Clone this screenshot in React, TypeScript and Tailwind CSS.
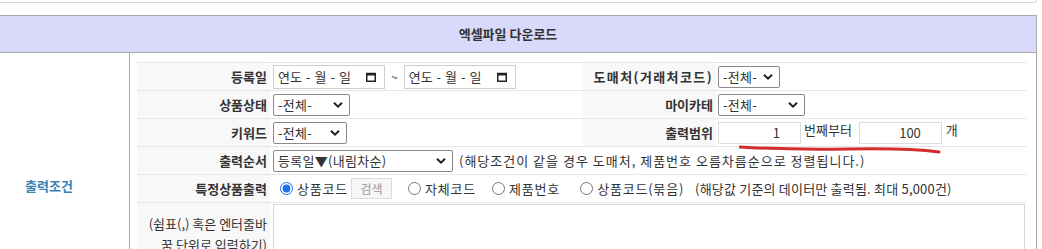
import React from "react";

const font = { fontFamily: '"Noto Sans CJK KR", "Noto Sans", sans-serif' };

function Chevron() {
  return (
    <svg
      className="pointer-events-none absolute right-[7px] top-1/2 -translate-y-1/2"
      width="10"
      height="7"
      viewBox="0 0 10 7"
      fill="none"
    >
      <path d="M1 1.2 L5 5.2 L9 1.2" stroke="#222" strokeWidth="2" />
    </svg>
  );
}

function Select({ width, value }: { width: string; value: string }) {
  return (
    <div className={`relative h-[22px] ${width}`}>
      <select
        defaultValue={value}
        className="h-full w-full appearance-none rounded-[2px] border border-[#8a8a8a] bg-white pl-[4px] text-[13px] leading-[20px] tracking-[0.3px] text-[#333] outline-none"
      >
        <option>{value}</option>
      </select>
      <Chevron />
    </div>
  );
}

function DateBox() {
  return (
    <div className="flex h-[24px] w-[112px] items-center justify-between border border-[#cfcfcf] bg-white pl-[4px] pr-[8px] text-[13px] text-[#333]">
      <span className="flex items-center">
        연도<span className="mx-[4px]">-</span>월<span className="mx-[4px]">-</span>일
      </span>
      <svg width="10" height="10" viewBox="0 0 10 10" fill="none">
        <rect x="0.75" y="1.5" width="8.5" height="7.75" stroke="#222" strokeWidth="1.5" />
        <rect x="0.75" y="1.5" width="8.5" height="2" fill="#222" />
      </svg>
    </div>
  );
}

function Label({ children, className = "" }: { children: React.ReactNode; className?: string }) {
  return (
    <div
      className={`flex h-[28px] items-center justify-end border-b border-[#e6e6e6] bg-[#f8f8f8] pr-[3px] text-[13px] font-bold text-[#333] ${className}`}
    >
      {children}
    </div>
  );
}

function Cell({ children, className = "" }: { children?: React.ReactNode; className?: string }) {
  return (
    <div className={`flex h-[28px] items-center border-b border-[#e6e6e6] text-[13px] text-[#333] ${className}`}>
      {children}
    </div>
  );
}

function Radio({ label, checked = false, className = "" }: { label: string; checked?: boolean; className?: string }) {
  return (
    <label className={`flex items-center ${className}`}>
      <input
        type="radio"
        name="spec"
        defaultChecked={checked}
        className="m-0 h-[13px] w-[13px] accent-[#1a73e8]"
      />
      <span className="ml-[4px] tracking-[0.8px]">{label}</span>
    </label>
  );
}

export default function App() {
  return (
    <div className="w-[1042px] bg-white" style={font}>
      <div className="h-[3px] w-[1037px] rounded-br-[5px] border-b border-r border-[#d6d6d6]" />
      <div className="h-[12px]" />

      <div className="w-[1037px] border-r border-[#a9a9a9]">
        <div className="flex h-[38px] items-center justify-center border-b border-t border-[#a9a9a9] bg-[#d9d9fb] pr-[20px] text-[13px] font-semibold text-[#333]">
          엑셀파일 다운로드
        </div>

        <div className="flex">
          <div className="flex w-[130px] items-center border-r border-[#a9a9a9] pl-[25px] text-[13px] font-bold text-[#3883b4]">
            출력조건
          </div>

          <div className="flex-1 pb-[10px] pl-[7px] pr-[9px] pt-[9px]">
            <div className="relative grid grid-cols-[133px_313px_133px_1fr] border-t border-[#e6e6e6]">
              {/* row 1 */}
              <Label>등록일</Label>
              <Cell className="pl-[3px]">
                <DateBox />
                <span className="mx-[6px] text-[12px]">~</span>
                <DateBox />
              </Cell>
              <Label className="tracking-[1.4px]">도매처(거래처코드)</Label>
              <Cell className="pl-[2px]">
                <Select width="w-[62px]" value="-전체-" />
              </Cell>

              {/* row 2 */}
              <Label>상품상태</Label>
              <Cell className="pl-[3px]">
                <Select width="w-[77px]" value="-전체-" />
              </Cell>
              <Label>마이카테</Label>
              <Cell className="pl-[2px]">
                <Select width="w-[87px]" value="-전체-" />
              </Cell>

              {/* row 3 */}
              <Label>키워드</Label>
              <Cell className="pl-[3px]">
                <Select width="w-[74px]" value="-전체-" />
              </Cell>
              <Label>출력범위</Label>
              <Cell className="pl-[2px]">
                <input
                  defaultValue="1"
                  className="h-[22px] w-[83px] border border-[#dcdcdc] bg-white pr-[20px] text-right text-[13px] outline-none"
                />
                <span className="ml-[3px] self-start pt-[1px]">번째부터</span>
                <input
                  defaultValue="100"
                  className="ml-[7px] h-[22px] w-[83px] border border-[#dcdcdc] bg-white pr-[20px] text-right text-[13px] outline-none"
                />
                <span className="ml-[4px] self-start pt-[1px]">개</span>
              </Cell>

              {/* row 4 */}
              <Label>출력순서</Label>
              <Cell className="col-span-3 pl-[3px]">
                <Select width="w-[180px]" value="등록일▼(내림차순)" />
                <span className="ml-[6px] tracking-[1px]">
                  (해당조건이 같을 경우 도매처, 제품번호 오름차름순으로 정렬됩니다.)
                </span>
              </Cell>

              {/* row 5 */}
              <Label>특정상품출력</Label>
              <Cell className="col-span-3 pl-[10px]">
                <Radio label="상품코드" checked />
                <button className="ml-[3px] h-[21px] w-[41px] border border-[#dcdcdc] bg-[#f6f6f6] text-[12px] text-[#9a9a9a]">
                  검색
                </button>
                <Radio className="ml-[16px]" label="자체코드" />
                <Radio className="ml-[16px]" label="제품번호" />
                <Radio className="ml-[20px]" label="상품코드(묶음)" />
                <span className="ml-[11px] tracking-[0.2px]">(해당값 기준의 데이터만 출력됨. 최대 5,000건)</span>
              </Cell>

              {/* row 6 */}
              <div className="flex h-[106px] justify-end bg-[#f8f8f8] pr-[3px] pt-[10px] text-right text-[13px] leading-[21px] text-[#333]">
                <span>
                  (쉼표(,) 혹은 엔터줄바
                  <br />
                  꿈 단위로 입력하기)
                </span>
              </div>
              <div className="col-span-3 flex h-[106px] pb-[3px] pl-[3px] pr-[2px] pt-[1px]">
                <textarea className="h-full w-full resize-none border border-[#d6d6d6] bg-white outline-none" />
              </div>

              {/* hand-drawn annotation */}
              <svg
                className="pointer-events-none absolute left-[602px] top-[82px]"
                width="205"
                height="10"
                viewBox="0 0 205 10"
                fill="none"
              >
                <path
                  d="M1 2 Q 50 5 110 4 T 200 7"
                  stroke="#d22c2c"
                  strokeWidth="3"
                  strokeLinecap="round"
                />
              </svg>
            </div>
          </div>
        </div>
      </div>
    </div>
  );
}
